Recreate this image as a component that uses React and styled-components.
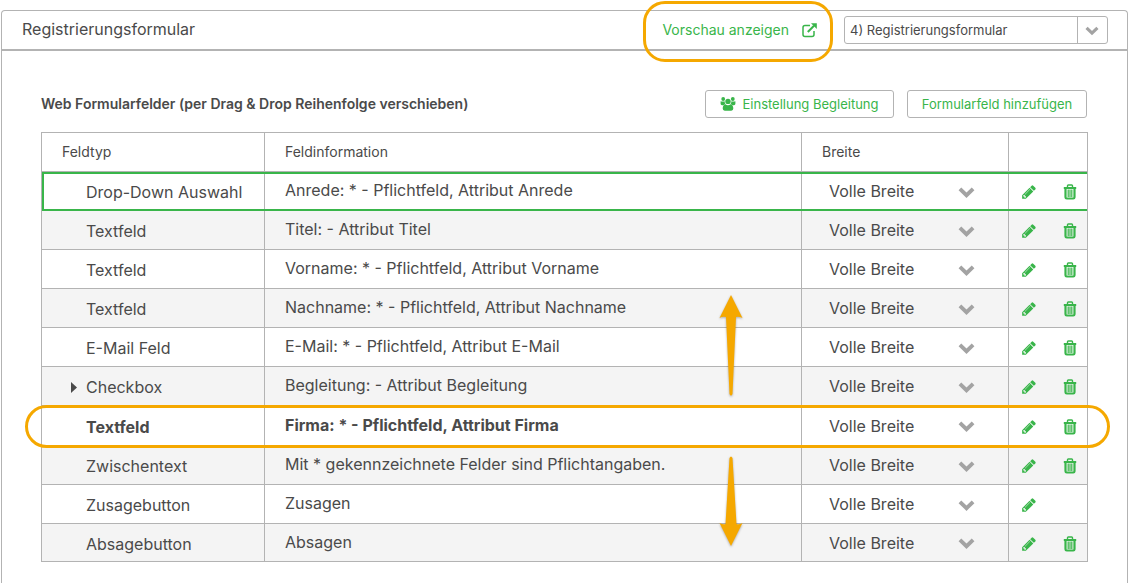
import styled, { createGlobalStyle } from "styled-components";

const GlobalStyle = createGlobalStyle`
  * {
    box-sizing: border-box;
  }
  body {
    margin: 0;
    background: #fff;
    color: #4a4a4a;
    font-family: Inter, Roboto, sans-serif;
    font-size: 16px;
  }
  button,
  select {
    font-family: inherit;
    color: inherit;
  }
`;

const Panel = styled.main`
  min-height: calc(100vh - 10px);
  margin: 10px 3px 0 1px;
  border: 1px solid #b3b3b3;
  border-bottom: 0;
  border-radius: 4px 4px 0 0;
`;
const Header = styled.header`
  display: flex;
  align-items: center;
  height: 40px;
  padding: 0 19px 0 20px;
  border-bottom: 2px solid #b3b3b3;
`;
const Title = styled.h1`
  flex: 1;
  margin: 0;
  padding-bottom: 2px;
  font-size: 16px;
  font-weight: 400;
`;
const PreviewLink = styled.a`
  position: relative;
  display: flex;
  align-items: center;
  gap: 13px;
  margin-right: 27px;
  color: #39b54a;
  font-size: 14px;
  line-height: 18px;
  text-decoration: none;
`;
const Ring = styled.span`
  position: absolute;
  border: 3px solid #f5a800;
  border-radius: 22px;
  pointer-events: none;
`;
const LinkRing = styled(Ring)`
  inset: -20px -16px -23px -19px;
`;
const RowRing = styled(Ring)`
  inset: 0 -23px -3px -16px;
`;
const SelectBox = styled.div`
  display: flex;
  align-items: center;
  position: relative;
  width: 264px;
  height: 28px;
  border: 1px solid #b3b3b3;
  border-radius: 3px;
`;
const FormSelect = styled.select`
  appearance: none;
  width: 100%;
  height: 100%;
  padding: 0 36px 0 5px;
  border: 0;
  background: none;
  font-size: 13px;
`;
const SelectArrow = styled.span`
  position: absolute;
  top: 0;
  right: 0;
  bottom: 0;
  display: flex;
  align-items: center;
  justify-content: center;
  width: 30px;
  padding-right: 1px;
  border-left: 1px solid #b3b3b3;
  color: #a3a3a3;
  pointer-events: none;
`;
const Content = styled.section`
  padding: 39px 39px 20px;
`;
const Toolbar = styled.div`
  display: flex;
  align-items: center;
  gap: 13px;
  margin-bottom: 14px;
  padding-right: 1px;
`;
const Subtitle = styled.h2`
  flex: 1;
  margin: 0;
  padding-bottom: 2px;
  font-size: 14px;
  font-weight: 600;
`;
const Button = styled.button`
  display: flex;
  align-items: center;
  justify-content: center;
  gap: 6px;
  width: ${({ $width }) => $width}px;
  height: 28px;
  padding: 0;
  border: 1px solid #b3b3b3;
  border-radius: 3px;
  background: #fff;
  color: #39b54a;
  font-size: 13px;
  white-space: nowrap;
`;
const Table = styled.table`
  width: 100%;
  table-layout: fixed;
  border-collapse: separate;
  border-spacing: 0;
  border: solid #b3b3b3;
  border-width: 0 1px 1px 0;
`;
const Col = styled.col`
  width: ${({ $width }) => $width}px;
`;
const Th = styled.th`
  height: 39px;
  padding: 0 20px 2px;
  border: solid #b3b3b3;
  border-width: 1px 0 0 1px;
  font-size: 14px;
  font-weight: 400;
  text-align: left;
`;
const Td = styled.td`
  height: 39px;
  padding: 0 20px;
  border: solid #b3b3b3;
  border-width: 1px 0 0 1px;
  white-space: nowrap;

  tr:last-child > & {
    height: 38px;
  }
`;
const TypeCell = styled(Td)`
  padding: 2px 0 0 44px;
`;
const InfoCell = styled(Td)`
  padding-bottom: 2px;
`;
const Row = styled.tr`
  &:nth-child(even) {
    background: #f4f4f4;
  }
  ${({ $selected }) =>
    $selected &&
    `
    position: relative;
    z-index: 1;
  `}
  ${({ $marked }) =>
    $marked &&
    `
    position: relative;
    z-index: 1;
    height: 40px;
    font-weight: 700;
  `}
`;
const SelectionFrame = styled.span`
  position: absolute;
  inset: 1px 0 -1px 1px;
  border: 2px solid #39b54a;
  border-right: 0;
  pointer-events: none;
`;
const Expander = styled.button`
  display: inline-flex;
  width: 15px;
  margin-left: -15px;
  padding: 0 0 3px;
  border: 0;
  background: none;
`;
const WidthSelect = styled.div`
  display: flex;
  align-items: center;
  justify-content: space-between;
  position: relative;
  padding: 0 13px 0 7px;
  color: #a3a3a3;

  select {
    appearance: none;
    width: 100%;
    padding: 0;
    border: 0;
    background: none;
    color: #4a4a4a;
    font-size: 16px;
  }
  svg {
    flex: none;
    pointer-events: none;
  }
`;
const Actions = styled.div`
  display: flex;
  align-items: center;
  gap: 26px;
  margin-left: -8px;
  padding-top: 2px;
`;
const IconButton = styled.button`
  display: flex;
  padding: 0;
  border: 0;
  background: none;
  color: #39b54a;
`;
const MoveArrow = styled.svg`
  position: absolute;
  right: 344px;
  fill: #f5a800;
  filter: drop-shadow(0 1px 1px rgba(0, 0, 0, 0.3));
  pointer-events: none;
`;
const ArrowUp = styled(MoveArrow)`
  bottom: calc(100% + 8px);
`;
const ArrowDown = styled(MoveArrow)`
  top: calc(100% + 11px);
`;

const Chevron = ({ size = 17 }) => (
  <svg width={size} height={size} viewBox="0 0 16 16" aria-hidden="true">
    <path d="M1.800 5.500L8 11.500l6.200-6" fill="none" stroke="currentColor" strokeWidth="3.600" />
  </svg>
);

const PencilIcon = () => (
  <svg width="16" height="16" viewBox="0 0 1792 1792" fill="currentColor">
    <path d="M491 1536l91-91-235-235-91 91v107h128v128h107zm523-928q0-22-22-22-10 0-17 7l-542 542q-7 7-7 17 0 22 22 22 10 0 17-7l542-542q7-7 7-17zm-54-192l416 416-832 832h-416v-416zm683 96q0 53-37 90l-166 166-416-416 166-165q36-38 90-38 53 0 91 38l235 234q37 39 37 91z" />
  </svg>
);

const TrashIcon = () => (
  <svg width="14" height="16" viewBox="0 0 14 16" fill="none" stroke="currentColor">
    <path d="M4.500 3V1.800q0-.8.8-.8h3.400q.8 0 .8.8V3" strokeWidth="1.400" />
    <path d="M.8 4h12.400" strokeWidth="2" />
    <path d="M2.500 4v9.200q0 1.300 1.300 1.300h6.400q1.300 0 1.300-1.300V4" strokeWidth="2.200" />
    <path d="M5.200 5.500V13M7 5.500V13M8.800 5.500V13" strokeWidth="1.200" />
  </svg>
);

const ExternalIcon = () => (
  <svg width="15" height="15" viewBox="0 0 15 15" fill="none" stroke="currentColor">
    <path d="M8 2.500H3Q1 2.500 1 4.500v7q0 2 2 2h7q2 0 2-2V8" strokeWidth="1.500" />
    <path d="M5.800 9L12 2.800" strokeWidth="2" />
    <path d="M9 .2h5.800V6z" fill="currentColor" stroke="none" />
  </svg>
);

const GroupIcon = () => (
  <svg width="16" height="14" viewBox="0 0 16 14" fill="currentColor">
    <circle cx="3.200" cy="2" r="1.900" />
    <circle cx="12.800" cy="2" r="1.900" />
    <circle cx="8" cy="4.400" r="2.700" />
    <path d="M.6 4.200q2 .8 4 0 0 1.800 1 3-1.400.2-2 1H2Q.6 8.200.6 6.800z" />
    <path d="M15.400 4.200q-2 .8-4 0 0 1.800-1 3 1.400.2 2 1H14q1.400 0 1.400-1.400z" />
    <path d="M5.300 7.300q2.700 1.700 5.400 0 2.600.6 2.600 4.300 0 2.100-2 2.100H4.700q-2 0-2-2.100 0-3.700 2.600-4.300z" />
  </svg>
);

const fields = [
  { type: "Drop-Down Auswahl", info: "Anrede: * - Pflichtfeld, Attribut Anrede", selected: true },
  { type: "Textfeld", info: "Titel: - Attribut Titel" },
  { type: "Textfeld", info: "Vorname: * - Pflichtfeld, Attribut Vorname" },
  { type: "Textfeld", info: "Nachname: * - Pflichtfeld, Attribut Nachname" },
  { type: "E-Mail Feld", info: "E-Mail: * - Pflichtfeld, Attribut E-Mail" },
  { type: "Checkbox", info: "Begleitung: - Attribut Begleitung", expandable: true },
  { type: "Textfeld", info: "Firma: * - Pflichtfeld, Attribut Firma", marked: true },
  { type: "Zwischentext", info: "Mit * gekennzeichnete Felder sind Pflichtangaben." },
  { type: "Zusagebutton", info: "Zusagen", locked: true },
  { type: "Absagebutton", info: "Absagen" },
];

function FieldRow({ field }) {
  const { type, info, selected, marked, expandable, locked } = field;

  return (
    <Row $selected={selected} $marked={marked}>
      <TypeCell>
        {expandable && (
          <Expander aria-label="Aufklappen">
            <svg width="6" height="11" viewBox="0 0 6 11" fill="currentColor">
              <path d="M0 0l6 5.500L0 11z" />
            </svg>
          </Expander>
        )}
        {type}
        {selected && <SelectionFrame />}
      </TypeCell>
      <InfoCell>
        {info}
        {marked && (
          <>
            <RowRing />
            <ArrowUp width="24" height="102" viewBox="0 0 24 102">
              <path d="M12 0l11.500 23q-4-2-6.500-1l-3.500 77q-1.500 3-3 0L7 22q-3-1-6.500 1z" />
            </ArrowUp>
            <ArrowDown width="24" height="90" viewBox="0 0 24 90">
              <path d="M12 90L.5 67q4 2 6 1L10.500 2q1.500-3 3 0L17.500 68q2.500 1 6-1z" />
            </ArrowDown>
          </>
        )}
      </InfoCell>
      <Td>
        <WidthSelect>
          <select aria-label={`Breite ${info}`}>
            <option>Volle Breite</option>
          </select>
          <Chevron />
        </WidthSelect>
      </Td>
      <Td>
        <Actions>
          <IconButton aria-label="Bearbeiten">
            <PencilIcon />
          </IconButton>
          {!locked && (
            <IconButton aria-label="Löschen">
              <TrashIcon />
            </IconButton>
          )}
        </Actions>
      </Td>
    </Row>
  );
}

function App() {
  return (
    <>
      <GlobalStyle />
      <Panel>
        <Header>
          <Title>Registrierungsformular</Title>
          <PreviewLink href="#vorschau">
            Vorschau anzeigen
            <ExternalIcon />
            <LinkRing />
          </PreviewLink>
          <SelectBox>
            <FormSelect aria-label="Formular">
              <option>4) Registrierungsformular</option>
            </FormSelect>
            <SelectArrow>
              <Chevron size={14} />
            </SelectArrow>
          </SelectBox>
        </Header>
        <Content>
          <Toolbar>
            <Subtitle>Web Formularfelder (per Drag &amp; Drop Reihenfolge verschieben)</Subtitle>
            <Button $width={189}>
              <GroupIcon />
              Einstellung Begleitung
            </Button>
            <Button $width={180}>Formularfeld hinzufügen</Button>
          </Toolbar>
          <Table>
            <colgroup>
              <Col $width={223} />
              <col />
              <Col $width={207} />
              <Col $width={79} />
            </colgroup>
            <thead>
              <tr>
                <Th>Feldtyp</Th>
                <Th>Feldinformation</Th>
                <Th>Breite</Th>
                <Th aria-label="Aktionen" />
              </tr>
            </thead>
            <tbody>
              {fields.map((field) => (
                <FieldRow key={field.info} field={field} />
              ))}
            </tbody>
          </Table>
        </Content>
      </Panel>
    </>
  );
}

export default App;
